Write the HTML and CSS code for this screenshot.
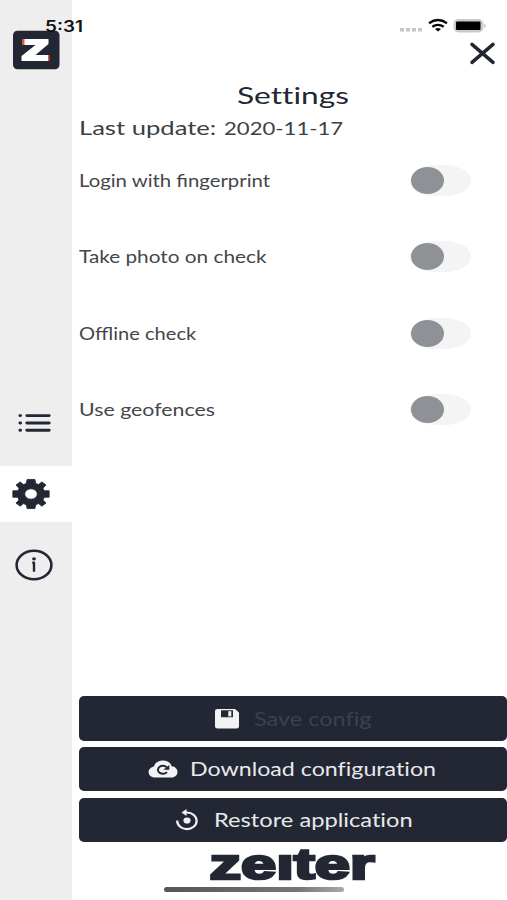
FILE: index.html
```html
<!DOCTYPE html>
<html lang="en">
<head>
<meta charset="utf-8">
<title>Settings</title>
<link rel="stylesheet" href="styles.css">
</head>
<body>
<div class="app">
  <nav class="sidebar">
    <svg class="brand" width="48" height="40" viewBox="0 0 48 40">
      <rect x="1" y=".8" width="46.500" height="38.400" rx="4.500" fill="#222733"/>
      <path d="M10 9h7v6h-7zM30 25h7.500v6H30z" fill="#e4572e"/>
      <path d="M12.500 9h24v5L23.500 25h12.500v6H9.500v-5l14-11h-11z" fill="#fff"/>
    </svg>
    <div class="tab tab-list">
      <svg width="36" height="24" viewBox="0 0 36 24" fill="none" stroke="#222733" stroke-width="2.900" stroke-linecap="round"><path d="M9.800 4.600h22.400M9.800 12h22.400M9.800 19.200h22.400M2.900 4.600h.7M2.900 12h.7M2.900 19.200h.7"/></svg>
    </div>
    <div class="tab tab-settings">
      <svg width="38" height="32" viewBox="0 0 38 32"><g transform="translate(19 16) scale(1.17 .97)"><path d="M-3.300-15H3.300L4-10.800 6.500-9.700 9.300-12.500 12.800-9.200 10.200-6 11.300-3.300H15.500V3.300H11.300L10.200 6.300 12.800 9.300 9.300 12.500 6.500 9.900 4 11.100 3.300 15H-3.300L-4 11.100-6.500 9.900-9.300 12.500-12.800 9.300-10.200 6.300-11.300 3.300H-15.500V-3.300H-11.300L-10.200-6-12.800-9.200-9.300-12.500-6.500-9.700-4-10.800zM0-5.400A5.400 5.400 0 1 0 0 5.400 5.400 5.400 0 1 0 0-5.400z" fill="#222733" fill-rule="evenodd" stroke="#222733" stroke-width=".8" stroke-linejoin="round"/></g></svg>
    </div>
    <div class="tab tab-info">
      <svg width="40" height="32" viewBox="0 0 40 32" fill="none" stroke="#222733"><ellipse cx="20" cy="16" rx="17.400" ry="14.300" stroke-width="2.600"/><path d="M18.300 13.800h1.700v9" stroke-width="2.400" stroke-linejoin="round"/><ellipse cx="20" cy="9.800" rx="1.900" ry="1.600" fill="#222733" stroke="none"/></svg>
    </div>
  </nav>
  <main class="content">
    <button class="close" aria-label="Close"><svg width="28" height="24" viewBox="0 0 28 24"><path d="M4 3.300l21 18M25 3.300l-21 18" stroke="#222733" stroke-width="3.500" stroke-linecap="round"/></svg></button>
    <h1><span class="t">Settings</span></h1>
    <p class="update"><span class="t label">Last update:</span><span class="t date">2020-11-17</span></p>
    <div class="options">
      <div class="option"><span class="t login">Login with fingerprint</span><i class="switch"></i></div>
      <div class="option"><span class="t photo">Take photo on check</span><i class="switch"></i></div>
      <div class="option"><span class="t offline">Offline check</span><i class="switch"></i></div>
      <div class="option"><span class="t geo">Use geofences</span><i class="switch"></i></div>
    </div>
    <div class="actions">
      <button class="action save" disabled>
        <svg width="26" height="22" viewBox="0 0 26 22"><path fill-rule="evenodd" d="M3.500 1H21L25 4.500V18.500Q25 20.500 22.500 20.500H3.500Q1 20.500 1 18.500V3Q1 1 3.500 1zM7 2.300V9.300H19V2.300z" fill="#f2f2f5"/><path d="M14.300 3.200h3v5.200h-3z" fill="#f2f2f5"/></svg>
        <span class="t">Save config</span>
      </button>
      <button class="action download">
        <svg width="30" height="20" viewBox="0 0 30 20"><path d="M7 18.500C3 18.500.6 16 .6 13S3 8 6 7.400C7 3.500 10.500 1.500 15 1.500S22.800 4 23.600 7.200C27.500 7.500 29.500 10 29.500 13S27 18.500 23.500 18.500z" fill="#f2f2f5"/><path d="M19 13.200A5 4 0 1 1 18.700 8.200" fill="none" stroke="#222733" stroke-width="2"/><path d="M21.300 6v4.800h-6z" fill="#222733"/></svg>
        <span class="t">Download configuration</span>
      </button>
      <button class="action restore">
        <svg width="24" height="22" viewBox="0 0 24 22"><path d="M2.200 11.500A9.700 8.300 0 1 0 11.900 3.500H9" fill="none" stroke="#f2f2f5" stroke-width="2.200"/><path d="M11.500 0v7L6.500 3.500z" fill="#f2f2f5"/><ellipse cx="12" cy="11.500" rx="3.600" ry="3.100" fill="#f2f2f5"/></svg>
        <span class="t">Restore application</span>
      </button>
    </div>
    <svg class="wordmark" width="170" height="38" viewBox="0 0 170 38"><text x="1.500" y="32" textLength="165" lengthAdjust="spacingAndGlyphs">zeıter</text></svg>
  </main>
  <div class="time"><span class="t">5:31</span></div>
  <svg class="status" width="90" height="20" viewBox="0 0 90 20">
    <path d="M1 11h4v3.600H1zM7 11h4v3.600H7zM13 11h4v3.600h-4zM19 11h4v3.600h-4z" fill="#c6c6c6"/>
    <g fill="none" stroke="#080808" stroke-width="2.300"><path d="M30 6.200Q39-.2 48 6.200M33.300 9.800Q39 5.800 44.700 9.800"/></g>
    <path d="M36 12Q39 10 42 12L39 14.500z" fill="#080808"/>
    <rect x="55.500" y="3" width="28" height="11.500" rx="4" fill="#ccc" stroke="#cacaca" stroke-width="2"/>
    <rect x="57" y="4.500" width="24.500" height="8.600" rx="1"/>
    <path d="M85.500 7q2.200 1.800 0 4z" fill="#999"/>
  </svg>
  <div class="home"></div>
</div>
</body>
</html>
```
FILE: styles.css
```css
* { box-sizing: border-box; }
body { margin: 0; background: #fff; color: #222733; font-family: Lato, "Open Sans", sans-serif; }
.app { position: relative; display: grid; grid-template-columns: 72px 1fr; width: 507px; height: 900px; overflow: hidden; }
.t { display: inline-block; white-space: nowrap; transform-origin: left center; }
.sidebar { display: flex; flex-direction: column; background: #eee; }
.brand { display: block; margin: 30px 0 0 12px; }
.tab { display: flex; align-items: center; height: 56px; }
.tab-list { margin-top: 325px; padding-left: 17px; }
.tab-settings { margin-top: 15px; padding-left: 12px; background: #fff; }
.tab-info { margin-top: 15px; padding-left: 14px; }
.content { display: flex; flex-direction: column; padding: 41px 0 0 7px; }
button { border: 0; font: inherit; padding: 0; background: none; }
.close { align-self: flex-end; height: 24px; margin-right: 11px; }
.close svg { display: block; }
h1 { margin: 13px 0 0; height: 33px; line-height: 33px; font-size: 24px; font-weight: 400; padding-left: 158px; font-variant-ligatures: none; }
h1 .t { transform: scaleX(1.32); }
.update { display: flex; margin: 0; height: 31px; line-height: 33px; font-size: 20px; color: #3c3f46; }
.label { width: 145px; transform: scaleX(1.28); }
.date { font-size: 17.500px; line-height: 36px; transform: scaleX(1.265); }
.options { display: grid; grid-template-rows: repeat(4, 76.300px); margin-top: .4px; }
.option { display: flex; align-items: center; justify-content: space-between; padding-right: 36px; font-size: 17px; color: #44464b; }
.login { transform: scaleX(1.195); }
.photo { transform: scaleX(1.222); }
.offline { transform: scaleX(1.182); }
.geo { transform: scaleX(1.255); }
.switch { display: block; width: 61px; height: 31px; border-radius: 27px / 16px; background: #f4f4f5; padding: 2px 1px; }
.switch::before { content: ""; display: block; width: 33px; height: 27px; border-radius: 50%; background: #8e9297; }
.actions { display: grid; grid-auto-rows: 44.500px; gap: 6.200px; margin-top: 248.700px; }
.action { display: flex; align-items: center; border-radius: 5px; background: #222733; color: #e8e9ec; font-size: 18.500px; font-variant-ligatures: none; }
.action svg { flex: none; }
.save { padding-left: 135px; }
.save .t { margin-left: 14px; color: #3d414a; transform: scaleX(1.27); }
.download { padding-left: 69px; }
.download .t { margin-left: 12px; transform: scaleX(1.255); }
.restore { padding-left: 96px; }
.restore .t { margin-left: 15px; transform: scaleX(1.28); }
.wordmark { margin: 5px 0 0 129px; overflow: visible; }
.wordmark text { font: 700 43px "Liberation Sans", sans-serif; fill: #222733; stroke: #222733; stroke-width: 2.600px; }
.time { position: absolute; left: 45px; top: 16px; font: 600 15.500px/21px Inter, sans-serif; color: #111; }
.time .t { transform: scaleX(1.22); }
.status { position: absolute; left: 399px; top: 17px; }
.home { position: absolute; left: 164px; top: 887px; width: 180px; height: 5px; border-radius: 3px; background: linear-gradient(90deg, #555 0%, #777 75%, #aaa 100%); }
```
